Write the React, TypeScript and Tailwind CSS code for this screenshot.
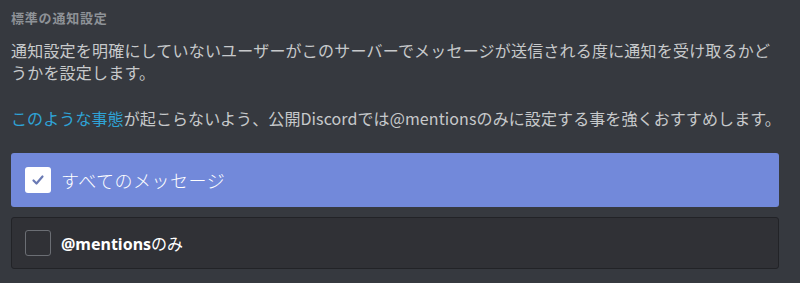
export default function App() {
  return (
    <div
      className="h-[283px] w-[800px] overflow-hidden bg-[#36393f] px-[11px] pt-[10px]"
      style={{ fontFamily: '"Noto Sans CJK JP", "Noto Sans", sans-serif' }}
    >
      <h5 className="text-[13px] font-bold leading-[16px] tracking-[0.8px] text-[#8e9297]">
        標準の通知設定
      </h5>

      <div className="mt-[13px] w-[770px] text-[16px] leading-[22px] text-[#c7c9cb]">
        <p className="tracking-[0.2px]">
          通知設定を明確にしていないユーザーがこのサーバーでメッセージが送信される度に通知を受け取るかどうかを設定します。
        </p>
        <p className="mt-[24px] whitespace-nowrap tracking-[0.1px]">
          <span className="text-[#2fa3d6]">このような事態</span>
          が起こらないよう、公開Discordでは@mentionsのみに設定する事を強くおすすめします。
        </p>
      </div>

      <div className="mt-[24px] flex w-[768px] flex-col gap-[10px]">
        {/* selected option */}
        <div className="flex h-[54px] items-center gap-[10px] rounded-[3px] bg-[#7289da] px-[14px]">
          <div className="flex h-[26px] w-[26px] items-center justify-center rounded-[3px] bg-white">
            <svg width="16" height="16" viewBox="0 0 16 16" fill="none">
              <path
                d="M3.5 8.5 6.5 11.5 12.5 4.5"
                stroke="#6a7ab4"
                strokeWidth="2.2"
                strokeLinecap="round"
                strokeLinejoin="round"
              />
            </svg>
          </div>
          <span className="text-[18px] font-light tracking-[0.5px] text-white">
            すべてのメッセージ
          </span>
        </div>

        {/* unselected option */}
        <div className="flex h-[52px] items-center gap-[10px] rounded-[3px] border border-[#222327] bg-[#303136] px-[13px]">
          <div className="h-[26px] w-[26px] rounded-[3px] border border-[#6b6e74]" />
          <span className="text-[16px] text-white">
            <span className="font-bold" style={{ fontFamily: '"Noto Sans", sans-serif' }}>
              @mentions
            </span>
            のみ
          </span>
        </div>
      </div>
    </div>
  );
}
